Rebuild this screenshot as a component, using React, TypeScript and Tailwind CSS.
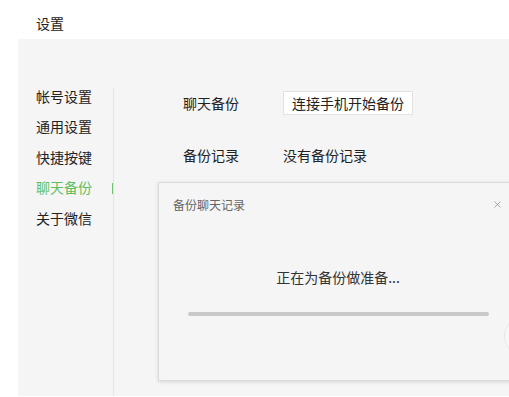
import { X } from "lucide-react";

const navItems = ["帐号设置", "通用设置", "快捷按键", "聊天备份", "关于微信"];

export default function App() {
    return (
        <div
            className="w-[509px] h-[397px] bg-white overflow-hidden flex flex-col text-[#333] relative"
            style={{ fontFamily: '"Microsoft YaHei", "Noto Sans CJK SC", "Noto Sans", sans-serif' }}
        >
            {/* Title */}
            <div className="h-[39px] shrink-0 pl-[36px] pt-[13px] text-[14px] leading-[20px] text-[#222]">设置</div>

            {/* Body */}
            <div className="ml-[18px] h-[357px] bg-[#f5f5f5] flex">
                {/* Nav */}
                <nav className="w-[95px] shrink-0 pl-[18px] pt-[42px]">
                    {navItems.map((item) => (
                        <div
                            key={item}
                            className={`h-[30.5px] flex items-center text-[14px] relative ${item === "聊天备份" ? "text-[#5fbf5f]" : "text-[#222]"}`}
                        >
                            {item}
                            {item === "聊天备份" && (
                                <span className="absolute right-[-1px] top-[10px] w-[2px] h-[11px] bg-[#6ec46e]" />
                            )}
                        </div>
                    ))}
                </nav>

                {/* Content */}
                <div className="flex-1 mt-[49px] border-l border-[#e4e4e4] relative">
                    <div className="pl-[69px] pt-[2px] flex items-center h-[28px] text-[14px]">
                        <span className="w-[100px] text-[#222]">聊天备份</span>
                        <button className="h-[24px] px-[8px] bg-white border border-[#e2e2e2] text-[14px] leading-[22px] text-[#222]">
                            连接手机开始备份
                        </button>
                    </div>
                    <div className="pl-[69px] mt-[29px] flex items-center h-[20px] text-[14px] text-[#222]">
                        <span className="w-[100px]">备份记录</span>
                        <span>没有备份记录</span>
                    </div>

                    {/* Dialog */}
                    <div className="absolute left-[44px] top-[94px] w-[360px] h-[199px] bg-[#f5f5f5] border border-[#dadada] shadow-[0_1px_4px_rgba(0,0,0,0.12)] flex flex-col">
                        <div className="h-[44px] pl-[14px] pr-[16px] flex items-center justify-between">
                            <span className="text-[12px] text-[#666]">备份聊天记录</span>
                            <X className="w-[11px] h-[11px] text-[#888] mr-[-2px] mt-[-2px]" strokeWidth={1.5} />
                        </div>
                        <div className="mt-[40px] text-center text-[14px] text-[#333]">正在为备份做准备...</div>
                        <div className="mt-[24px] mx-[29px] w-[301px] h-[4px] rounded-full bg-[#c9c9c9]" />
                    </div>
                </div>
            </div>

            {/* partially visible round control at the right edge */}
            <div className="absolute left-[504px] top-[316px] w-[40px] h-[40px] rounded-full border border-[#e8e8e8] bg-[#f7f7f7]" />
        </div>
    );
}
